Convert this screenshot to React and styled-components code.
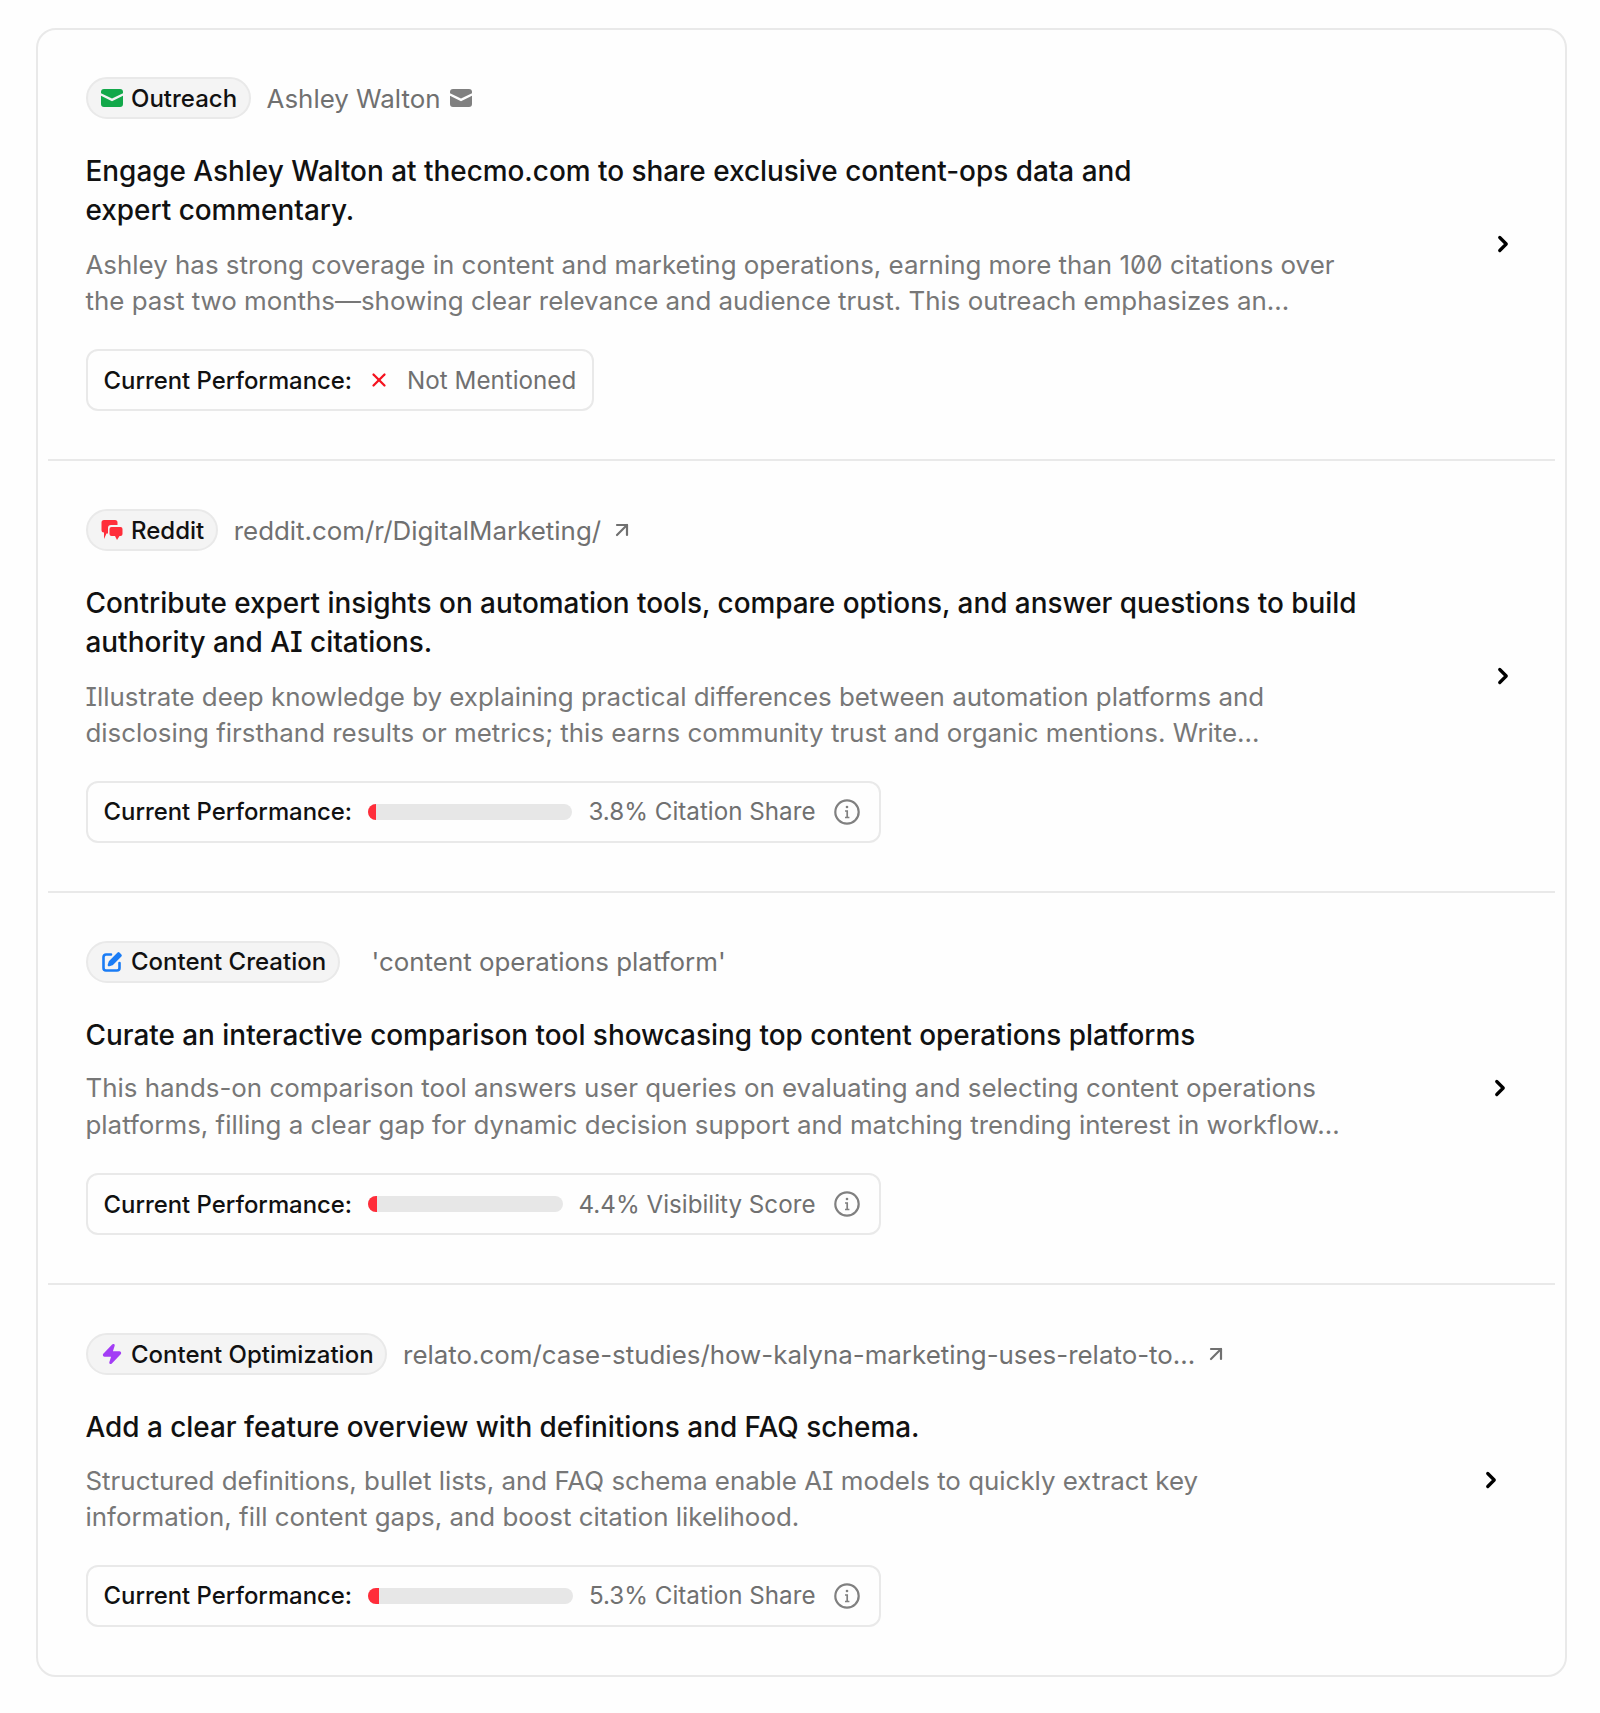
import styled, { createGlobalStyle } from "styled-components";
import { ChevronRight, ArrowUpRight, X, Zap } from "lucide-react";

const GlobalStyle = createGlobalStyle`
  html, body {
    margin: 0;
    background: #fefefe;
    font-family: Inter, "Liberation Sans", sans-serif;
    font-feature-settings: "cv08", "zero";
  }
`;

const Page = styled.div`
  padding: 28px 33px 34px 36px;
`;

const Card = styled.div`
  border: 2px solid #e9e9e9;
  border-radius: 20px;
  padding: 0 10px;
  background: #fefefe;
`;

const Item = styled.div`
  display: flex;
  align-items: center;
  justify-content: space-between;
  padding: 48px ${(p) => p.$right}px 48px 37.5px;
  &:first-child {
    padding-top: 47px;
  }
  & + & {
    border-top: 2px solid #e9e9e9;
  }
`;

const Main = styled.div`
  display: flex;
  flex-direction: column;
  align-items: flex-start;
`;

const TopRow = styled.div`
  display: flex;
  align-items: center;
  gap: ${(p) => p.$gap}px;
  height: 42px;
`;

const Pill = styled.div`
  display: flex;
  align-items: center;
  gap: 8.5px;
  height: 42px;
  box-sizing: border-box;
  padding: 0 11.5px 0 13px;
  border: 2px solid #e9e9e9;
  border-radius: 21px;
  background: #f4f4f4;
  color: #111;
  font-size: 24px;
  font-weight: 450;
  white-space: nowrap;
`;

const Meta = styled.span`
  display: flex;
  align-items: center;
  gap: 9px;
  color: #707070;
  font-size: 25.9px;
  white-space: nowrap;
`;

const Title = styled.h3`
  margin: 33px 0 0;
  color: #111;
  font-size: 27.9px;
  line-height: 38.5px;
  font-weight: 450;
  white-space: nowrap;
`;

const Desc = styled.p`
  margin: ${(p) => p.$gap}px 0 0;
  color: #777;
  font-size: 25.9px;
  line-height: ${(p) => p.$line || 36}px;
  white-space: nowrap;
`;

const PerfBox = styled.div`
  display: flex;
  align-items: center;
  height: 62px;
  box-sizing: border-box;
  margin-top: 30px;
  padding: 0 ${(p) => (p.$wide ? "19px" : "16px")} 0 16px;
  border: 2px solid #e9e9e9;
  border-radius: 12px;
  width: ${(p) => (p.$wide ? "795px" : "auto")};
  font-size: 23.9px;
  white-space: nowrap;
`;

const PerfLabel = styled.span`
  color: #111;
  font-weight: 450;
  margin-right: 16px;
`;

const PerfValue = styled.span`
  color: #707070;
  font-size: 24.2px;
  font-weight: 400;
`;

const Track = styled.div`
  flex: 1;
  height: 16px;
  border-radius: 8px;
  background: #e7e7e7;
  overflow: hidden;
  margin-right: 16px;
`;

const Fill = styled.div`
  height: 100%;
  background: #ff2d3a;
`;

const InfoSvg = styled.svg`
  margin-left: 18px;
  color: #808080;
  flex-shrink: 0;
`;

const Cross = styled(X)`
  color: #f5131f;
  margin-right: 17px;
`;

const Chevron = styled(ChevronRight)`
  color: #000;
  flex-shrink: 0;
`;

const MailIcon = ({ color }) => (
  <svg width="22" height="18" viewBox="0 0 22 18" fill={color}>
    <path d="M3 0h16a3 3 0 0 1 3 3v1.200l-11 5.400L0 4.200V3a3 3 0 0 1 3-3z" />
    <path d="M0 6.800l11 5.400 11-5.400V15a3 3 0 0 1-3 3H3a3 3 0 0 1-3-3z" />
  </svg>
);

const ChatIcon = () => (
  <svg width="22" height="22" viewBox="0 0 22 22" fill="#ff2d3a">
    <path d="M3 1h11a2.500 2.500 0 0 1 2.500 2.500V6H10a3 3 0 0 0-3 3v5.500H5.500L3 20v-6.500a2.500 2.500 0 0 1-2.500-2.500V3.500A2.500 2.500 0 0 1 3 1z" />
    <path d="M10.500 8h9a2 2 0 0 1 2 2v5a2 2 0 0 1-2 2h-1L16 21l-2-4h-3.500a2 2 0 0 1-2-2v-5a2 2 0 0 1 2-2z" />
  </svg>
);

const EditIcon = () => (
  <svg width="22" height="22" viewBox="0 0 22 22" fill="none" stroke="#1a7cf5" strokeWidth="2.600" strokeLinecap="round" strokeLinejoin="round">
    <path d="M10 3.500H5A2.500 2.500 0 0 0 2.500 6v11A2.500 2.500 0 0 0 5 19.500h11a2.500 2.500 0 0 0 2.500-2.500v-5" />
    <path d="M17.500 2.500l2 2L11 13l-3 1 1-3z" fill="#1a7cf5" />
  </svg>
);

const InfoIcon = () => (
  <InfoSvg width="26" height="26" viewBox="0 0 26 26" fill="none" stroke="currentColor">
    <circle cx="13" cy="13" r="11.700" strokeWidth="2.200" />
    <circle cx="13" cy="8" r="1.300" fill="currentColor" stroke="none" />
    <path d="M11 12h2.200v6.500M11 18.500h4.400" strokeWidth="1.700" />
  </InfoSvg>
);

const Performance = ({ value, percent }) => (
  <PerfBox $wide>
    <PerfLabel>Current Performance:</PerfLabel>
    <Track>
      <Fill style={{ width: `${percent}%` }} />
    </Track>
    <PerfValue>{value}</PerfValue>
    <InfoIcon />
  </PerfBox>
);

export default function App() {
  return (
    <Page>
      <GlobalStyle />
      <Card>
        <Item $right={39}>
          <Main>
            <TopRow $gap={16}>
              <Pill>
                <MailIcon color="#12a84a" />
                Outreach
              </Pill>
              <Meta>
                Ashley Walton <MailIcon color="#808080" />
              </Meta>
            </TopRow>
            <Title>
              Engage Ashley Walton at thecmo.com to share exclusive content-ops data and
              <br />
              expert commentary.
            </Title>
            <Desc $gap={18}>
              Ashley has strong coverage in content and marketing operations, earning more than 100 citations over
              <br />
              the past two months—showing clear relevance and audience trust. This outreach emphasizes an...
            </Desc>
            <PerfBox>
              <PerfLabel>Current Performance:</PerfLabel>
              <Cross size={22} strokeWidth={2.5} />
              <PerfValue>Not Mentioned</PerfValue>
            </PerfBox>
          </Main>
          <Chevron size={26} strokeWidth={3} />
        </Item>

        <Item $right={39}>
          <Main>
            <TopRow $gap={16}>
              <Pill>
                <ChatIcon />
                Reddit
              </Pill>
              <Meta>
                reddit.com/r/DigitalMarketing/ <ArrowUpRight size={24} strokeWidth={2.2} />
              </Meta>
            </TopRow>
            <Title>
              Contribute expert insights on automation tools, compare options, and answer questions to build
              <br />
              authority and AI citations.
            </Title>
            <Desc $gap={17.5}>
              Illustrate deep knowledge by explaining practical differences between automation platforms and
              <br />
              disclosing firsthand results or metrics; this earns community trust and organic mentions. Write...
            </Desc>
            <Performance value="3.8% Citation Share" percent={3.8} />
          </Main>
          <Chevron size={26} strokeWidth={3} />
        </Item>

        <Item $right={42}>
          <Main>
            <TopRow $gap={32}>
              <Pill>
                <EditIcon />
                Content Creation
              </Pill>
              <Meta>'content operations platform'</Meta>
            </TopRow>
            <Title>Curate an interactive comparison tool showcasing top content operations platforms</Title>
            <Desc $gap={15} $line={37}>
              This hands-on comparison tool answers user queries on evaluating and selecting content operations
              <br />
              platforms, filling a clear gap for dynamic decision support and matching trending interest in workflow...
            </Desc>
            <Performance value="4.4% Visibility Score" percent={4.4} />
          </Main>
          <Chevron size={26} strokeWidth={3} />
        </Item>

        <Item $right={51}>
          <Main>
            <TopRow $gap={16}>
              <Pill>
                <Zap size={22} fill="#a33df5" color="#a33df5" />
                Content Optimization
              </Pill>
              <Meta>
                relato.com/case-studies/how-kalyna-marketing-uses-relato-to... <ArrowUpRight size={24} strokeWidth={2.2} />
              </Meta>
            </TopRow>
            <Title>Add a clear feature overview with definitions and FAQ schema.</Title>
            <Desc $gap={16}>
              Structured definitions, bullet lists, and FAQ schema enable AI models to quickly extract key
              <br />
              information, fill content gaps, and boost citation likelihood.
            </Desc>
            <Performance value="5.3% Citation Share" percent={5.3} />
          </Main>
          <Chevron size={26} strokeWidth={3} />
        </Item>
      </Card>
    </Page>
  );
}
